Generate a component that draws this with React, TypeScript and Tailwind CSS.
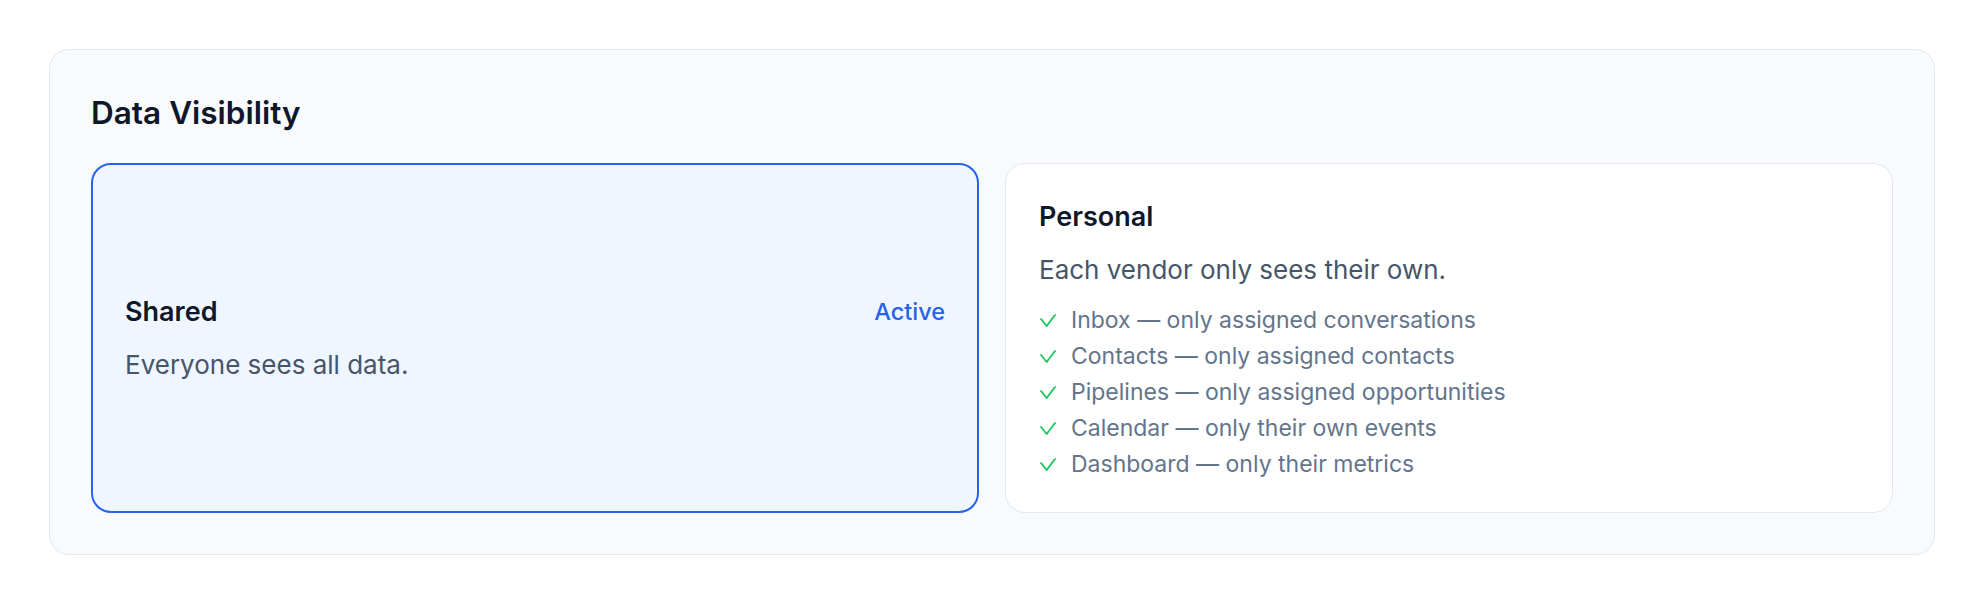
const rules = [
  'Inbox — only assigned conversations',
  'Contacts — only assigned contacts',
  'Pipelines — only assigned opportunities',
  'Calendar — only their own events',
  'Dashboard — only their metrics',
];

function CheckMark() {
  return (
    <svg width="16" height="13" viewBox="0 0 16 13" fill="none" className="ml-[1px] shrink-0">
      <polyline
        points="1,5 6.7,12 15,1"
        stroke="#22c55e"
        strokeWidth="1.9"
        strokeLinecap="round"
        strokeLinejoin="round"
      />
    </svg>
  );
}

export default function App() {
  return (
    <div className="min-h-screen bg-white pt-[49px] font-['Inter',sans-serif]">
      <section className="mx-[49px] rounded-[20px] border border-[#e2e8f0] bg-[#f8fafc] px-[41px] pt-[43px] pb-[41px]">
        <h2 className="mb-[30px] text-[31.5px] leading-[40px] font-semibold text-[#0f172a]">Data Visibility</h2>

        <div className="grid grid-cols-2 gap-[26px]">
          {/* selected option */}
          <div className="flex flex-col justify-center rounded-[20px] border-2 border-[#2563eb] bg-[#eff6ff] px-[32px]">
            <div className="flex items-center justify-between">
              <h3 className="text-[27px] leading-[35px] font-semibold text-[#0f172a]">Shared</h3>
              <span className="text-[23.5px] leading-[35px] font-medium text-[#2563eb]">Active</span>
            </div>
            <p className="mt-[18px] text-[26px] leading-[35px] text-[#475569]">Everyone sees all data.</p>
          </div>

          <div className="rounded-[20px] border border-[#e2e8f0] bg-white px-[33px] pt-[35px] pb-[30px]">
            <h3 className="text-[27px] leading-[35px] font-semibold text-[#0f172a]">Personal</h3>
            <p className="mt-[18px] text-[26px] leading-[35px] text-[#475569]">Each vendor only sees their own.</p>
            <ul className="mt-[15px]">
              {rules.map((r) => (
                <li key={r} className="flex items-center gap-[15px] text-[23px] leading-[36px] text-[#64748b]">
                  <CheckMark />
                  <span>{r}</span>
                </li>
              ))}
            </ul>
          </div>
        </div>
      </section>
    </div>
  );
}
